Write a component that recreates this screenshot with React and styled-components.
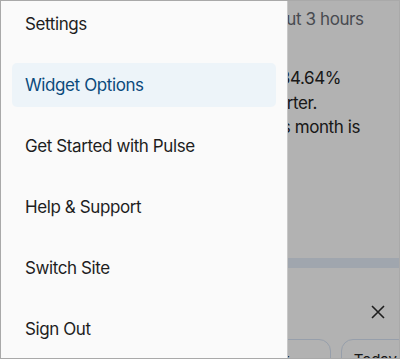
import React from 'react'
import styled, { createGlobalStyle } from 'styled-components'

const Global = createGlobalStyle`
  html, body { margin: 0; padding: 0; }
  body { font-family: Inter, "Noto Sans", sans-serif; }
  * { box-sizing: border-box; }
`

const menu = [
  { id: 1, label: 'Settings' },
  { id: 2, label: 'Widget Options', active: true },
  { id: 3, label: 'Get Started with Pulse' },
  { id: 4, label: 'Help & Support' },
  { id: 5, label: 'Switch Site' },
  { id: 6, label: 'Sign Out' }
]

const summary = [
  "The site's total post views are up 34.64%",
  'as compared with its previous quarter.',
  'The busiest day for post views this month is'
]

const App = () => {
  return (
    <Frame>
      <Global />
      <Page>
        <Updated>Your stats were last refreshed about 3 hours</Updated>
        <Summary>
          {summary.map(t => <Line key={t}>{t}</Line>)}
        </Summary>
        <Progress />
        <Sheet>
          <Close>
            <svg width="14" height="14" viewBox="0 0 14 14">
              <path d="M1 1L13 13M13 1L1 13" stroke="#2c2c2c" strokeWidth="1.6" fill="none" />
            </svg>
          </Close>
          <Chips>
            <Chip>This week</Chip>
            <Chip>Today</Chip>
          </Chips>
        </Sheet>
      </Page>
      <Backdrop />
      <Drawer>
        {menu.map(m => (
          <Item key={m.id} active={m.active}>{m.label}</Item>
        ))}
      </Drawer>
    </Frame>
  )
}
export default App

const Frame = styled.div`
  position: relative;
  width: 400px;
  height: 359px;
  overflow: hidden;
  background: #fff;
  border: 1px solid #a9a9a9;
`

const Page = styled.div`
  display: flex;
  flex-direction: column;
  padding: 6px 0 0 24px;
  font-size: 17px;
  letter-spacing: -0.4px;
  color: #252525;
`

const Updated = styled.div`
  line-height: 24px;
  color: #686c74;
  white-space: nowrap;
`

const Summary = styled.div`
  margin-top: 35px;
  display: flex;
  flex-direction: column;
`

const Line = styled.div`
  line-height: 24.5px;
  white-space: nowrap;
`

const Progress = styled.div`
  margin: 118px 0 0 -24px;
  height: 10px;
  background: #e6eefa;
`

const Sheet = styled.div`
  display: flex;
  flex-direction: column;
  margin-top: 37px;
`

const Close = styled.div`
  align-self: flex-end;
  width: 14px;
  height: 14px;
  margin-right: 14px;
  display: flex;
`

const Chips = styled.div`
  display: flex;
  justify-content: flex-end;
  gap: 10px;
  margin-top: 20px;
  margin-right: -11px;
`

const Chip = styled.div`
  height: 36px;
  padding: 10px 12px;
  border: 1.5px solid #d8e4f5;
  border-radius: 12px;
  font-size: 15px;
  letter-spacing: 0;
  white-space: nowrap;
  &:first-child { padding-right: 40px; }
`

const Backdrop = styled.div`
  position: absolute;
  inset: 0;
  background: rgba(0, 0, 0, 0.3);
`

const Drawer = styled.nav`
  position: absolute;
  left: 0;
  top: 0;
  bottom: 0;
  width: 287px;
  padding: 1px 11px 0 11px;
  display: flex;
  flex-direction: column;
  gap: 17px;
  background: #fafafa;
  border-right: 1px solid #c8c8c8;
`

const Item = styled.div`
  height: 44px;
  display: flex;
  align-items: center;
  padding-left: 13px;
  border-radius: 5px;
  font-size: 17px;
  letter-spacing: -0.4px;
  color: ${p => (p.active ? '#0b4a7c' : '#1e1e1e')};
  background: ${p => (p.active ? '#edf4f9' : 'transparent')};
`
